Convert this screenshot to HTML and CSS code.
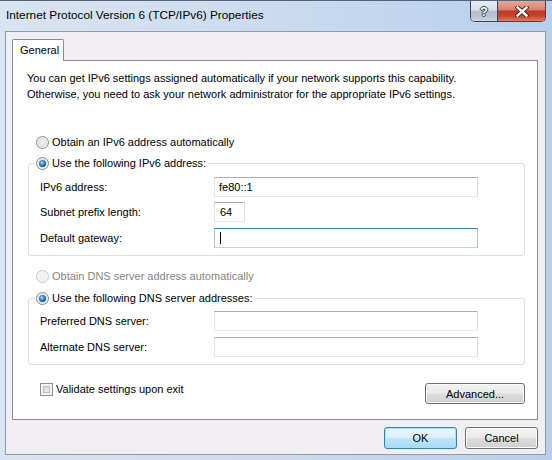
FILE: index.html
```html
<!DOCTYPE html>
<html>
<head>
<meta charset="utf-8">
<title>Internet Protocol Version 6 (TCP/IPv6) Properties</title>
<link rel="stylesheet" href="styles.css">
</head>
<body>
<div class="window">
  <div class="titlebar">
    <div class="title">Internet Protocol Version 6 (TCP/IPv6) Properties</div>
    <div class="caption">
      <div class="cap help"><span class="qmark">?</span></div>
      <div class="cap close">
        <svg width="14" height="11" viewBox="0 0 14 11">
          <path d="M2.5 1.5 L11.5 9.5 M11.5 1.5 L2.5 9.5" stroke="#4a2620" stroke-width="4.4" stroke-linecap="square" fill="none"/>
          <path d="M2.5 1.5 L11.5 9.5 M11.5 1.5 L2.5 9.5" stroke="#ffffff" stroke-width="2.4" stroke-linecap="square" fill="none"/>
        </svg>
      </div>
    </div>
  </div>
  <div class="client">
    <div class="tabs"><div class="tab">General</div></div>
    <div class="panel">
      <p class="intro">You can get IPv6 settings assigned automatically if your network supports this capability.<br>Otherwise, you need to ask your network administrator for the appropriate IPv6 settings.</p>
      <div class="opt opt-ip"><span class="radio"></span><span>Obtain an IPv6 address automatically</span></div>
      <fieldset class="group group-ip">
        <legend><span class="radio on"></span><span>Use the following IPv6 address:</span></legend>
        <div class="row"><span class="label">IPv6 address:</span><div class="input">fe80::1</div></div>
        <div class="row r-tight"><span class="label">Subnet prefix length:</span><div class="input short">64</div></div>
        <div class="row"><span class="label">Default gateway:</span><div class="input focus"><span class="caret"></span></div></div>
      </fieldset>
      <div class="opt opt-dns disabled"><span class="radio dis"></span><span>Obtain DNS server address automatically</span></div>
      <fieldset class="group group-dns">
        <legend><span class="radio on"></span><span>Use the following DNS server addresses:</span></legend>
        <div class="row r-tight"><span class="label">Preferred DNS server:</span><div class="input"></div></div>
        <div class="row"><span class="label">Alternate DNS server:</span><div class="input"></div></div>
      </fieldset>
      <div class="bottom-row">
        <div class="chk-item"><span class="check"></span><span>Validate settings upon exit</span></div>
        <div class="btn adv">Advanced...</div>
      </div>
    </div>
    <div class="buttons">
      <div class="btn default">OK</div>
      <div class="btn">Cancel</div>
    </div>
  </div>
</div>
</body>
</html>
```
FILE: styles.css
```css
* { box-sizing: border-box; }
html, body { margin: 0; padding: 0; }
body {
  width: 552px;
  height: 460px;
  overflow: hidden;
  font-family: "Liberation Sans", Arial, sans-serif;
  font-size: 11px;
  color: #000;
  background: #c3d6ee;
}
.window {
  width: 552px;
  height: 460px;
  border-top: 1px solid #556376;
  background: linear-gradient(90deg, #d9e4f2 0%, #ccdcf0 45%, #b7cfed 100%);
  display: flex;
  flex-direction: column;
}
.titlebar {
  flex: none;
  height: 30px;
  display: flex;
  justify-content: space-between;
  align-items: flex-start;
}
.title {
  padding-left: 6px;
  margin-top: 6px;
  font-size: 11.8px;
  line-height: 16px;
  white-space: nowrap;
}
.caption {
  display: flex;
  margin-right: 6px;
  height: 21px;
  border: 1px solid #3b4757;
  border-top: none;
  border-radius: 0 0 5px 5px;
  overflow: hidden;
}
.cap {
  height: 20px;
  display: flex;
  align-items: center;
  justify-content: center;
}
.help {
  width: 27px;
  border-right: 1px solid #3b4757;
  background: linear-gradient(#e6ecf3 0%, #d8e0ea 45%, #b3bfcc 52%, #b9c5d2 80%, #cfd9e3 100%);
}
.qmark {
  font-weight: bold;
  font-size: 13px;
  line-height: 13px;
  color: #f4f6f8;
  text-shadow: 1px 0 0 #36434f, -1px 0 0 #36434f, 0 1px 0 #36434f, 0 -1px 0 #36434f;
}
.close {
  width: 47px;
  background: linear-gradient(#eaa697 0%, #d9826d 42%, #c0391e 52%, #c9452a 75%, #e07b5c 100%);
}
.close svg { display: block; }
.client {
  flex: none;
  margin-left: 5px;
  width: 541px;
  height: 424px;
  border: 1px solid #8e9bab;
  background: #f1eef2;
  padding: 7px 0 0 6px;
}
.tabs { display: flex; }
.tab {
  position: relative;
  z-index: 1;
  width: 52px;
  height: 22px;
  padding-left: 7px;
  line-height: 20px;
  border: 1px solid #898c95;
  border-bottom: none;
  border-radius: 2px 2px 0 0;
  background: #fff;
  margin-bottom: -1px;
}
.panel {
  width: 526px;
  height: 360px;
  border: 1px solid #898c95;
  background: #fff;
  padding-left: 14px;
}
.intro {
  margin: 9px 0 0 0;
  line-height: 16px;
  white-space: nowrap;
}
.opt {
  display: flex;
  align-items: center;
  gap: 3px;
  height: 16px;
  margin-left: 9px;
  white-space: nowrap;
}
.opt-ip { margin-top: 32px; }
.opt-dns { margin-top: 12px; }
.disabled { color: #858585; }
.radio {
  flex: none;
  width: 13px;
  height: 13px;
  border-radius: 50%;
  border: 1px solid #8a8c8e;
  background: radial-gradient(circle at 50% 50%, #f3f3f3 0%, #e6e6e6 40%, #cfcfcf 75%, #e4e4e4 100%);
  box-shadow: inset 0 0 0 1px #f6f6f6;
  display: flex;
  align-items: center;
  justify-content: center;
}
.radio.on::after {
  content: "";
  width: 7px;
  height: 7px;
  border-radius: 50%;
  background: radial-gradient(circle at 42% 38%, #b9e6ff 0%, #4a9ad6 30%, #1b5a91 65%, #0c3360 100%);
}
.radio.dis {
  border-color: #c6c7c8;
  background: #f1f1f1;
}
.group {
  width: 497px;
  margin: 5px 0 0 1px;
  border: 1px solid #d5dfe5;
  border-radius: 3px;
  padding: 0 0 7px 11px;
  min-width: 0;
}
.group-dns { margin-top: 6px; }
.group legend {
  display: flex;
  align-items: center;
  gap: 3px;
  height: 16px;
  line-height: 16px;
  padding: 0 2px 0 1px;
  margin-left: -5px;
  white-space: nowrap;
}
.row {
  display: flex;
  align-items: center;
  height: 20px;
  margin-top: 6px;
}
.row.r-tight { margin-top: 5px; }
.label {
  width: 174px;
  flex: none;
  white-space: nowrap;
}
.input {
  width: 264px;
  height: 20px;
  border: 1px solid;
  border-color: #abadb3 #dbdfe6 #e3e9ef #e2e3ea;
  background: #fff;
  padding-left: 4px;
  display: flex;
  align-items: center;
  line-height: 16px;
}
.input.short { width: 31px; padding-left: 5px; }
.input.focus {
  border-color: #3d7bad #a4c9e3 #b7d9ed #a4c9e3;
  padding-left: 5px;
}
.caret {
  width: 1px;
  height: 12px;
  background: #000;
}
.bottom-row {
  width: 497px;
  margin: 16px 0 0 1px;
  display: flex;
  justify-content: space-between;
  align-items: flex-start;
}
.chk-item {
  display: flex;
  align-items: center;
  gap: 3px;
  height: 16px;
  margin-left: 12px;
  white-space: nowrap;
}
.check {
  flex: none;
  width: 13px;
  height: 13px;
  border: 1px solid #8e8f8f;
  background: linear-gradient(135deg, #c8ccd2 0%, #e6e8ea 60%, #f8f8f8 100%);
  box-shadow: inset 0 0 0 2px #f4f4f4, inset 0 0 0 3px #b8bcc2;
}
.btn {
  width: 73px;
  height: 22px;
  border: 1px solid #707070;
  border-radius: 3px;
  background: linear-gradient(#f2f2f2 0%, #ebebeb 48%, #dddddd 52%, #cfcfcf 100%);
  box-shadow: inset 0 0 0 1px #fbfbfb;
  display: flex;
  align-items: center;
  justify-content: center;
  line-height: 16px;
  white-space: nowrap;
}
.btn.adv {
  width: 100px;
  height: 21px;
  margin-top: 2px;
}
.btn.default {
  border-color: #3c7fb1;
  background: linear-gradient(#eaf6fd 0%, #d9f0fc 48%, #bee6fd 52%, #a7d9f5 100%);
  box-shadow: inset 0 0 0 1px #9ce6fb;
}
.buttons {
  display: flex;
  justify-content: flex-end;
  gap: 8px;
  margin-top: 7px;
  padding-right: 7px;
}
```
